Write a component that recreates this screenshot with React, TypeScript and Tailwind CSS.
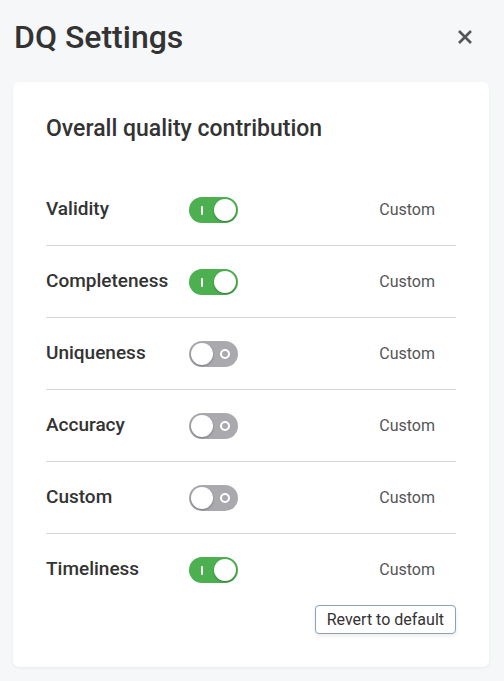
import React from "react";

const rows: { label: string; on: boolean }[] = [
  { label: "Validity", on: true },
  { label: "Completeness", on: true },
  { label: "Uniqueness", on: false },
  { label: "Accuracy", on: false },
  { label: "Custom", on: false },
  { label: "Timeliness", on: true },
];

function Toggle({ on }: { on: boolean }) {
  return (
    <div
      className={
        "relative w-[49px] h-[26px] rounded-full " +
        (on ? "bg-[#4caf50]" : "bg-[#a9a9ae]")
      }
    >
      {on ? (
        <>
          <div className="absolute left-[12px] top-[9px] w-[2px] h-[9px] bg-white rounded-sm" />
          <div className="absolute right-[2px] top-[2px] w-[22px] h-[22px] rounded-full bg-white shadow-[0_1px_2px_rgba(0,0,0,0.3)]" />
        </>
      ) : (
        <>
          <div className="absolute right-[8px] top-[8px] w-[10px] h-[10px] rounded-full border-2 border-white" />
          <div className="absolute left-[2px] top-[2px] w-[22px] h-[22px] rounded-full bg-white shadow-[0_1px_2px_rgba(0,0,0,0.3)]" />
        </>
      )}
    </div>
  );
}

export default function App() {
  return (
    <div
      className="w-[504px] h-[681px] bg-[#f6f7f9] overflow-hidden"
      style={{ fontFamily: "Roboto, 'Noto Sans', sans-serif" }}
    >
      <div className="flex items-center justify-between pl-[14px] pr-[31px] pt-[17px] h-[56px]">
        <h1 className="text-[32px] leading-[38px] font-medium text-[#333]">DQ Settings</h1>
        <svg width="16" height="16" viewBox="0 0 16 16" className="mt-[1px]">
          <path d="M2 2 L14 14 M14 2 L2 14" stroke="#555" strokeWidth="2.6" strokeLinecap="butt" />
        </svg>
      </div>
      <div className="mx-[13px] mt-[26px] w-[476px] bg-white rounded-[6px] shadow-[0_1px_3px_rgba(0,0,0,0.06)] px-[33px] pt-[32px] pb-[33px]">
        <h2 className="text-[23px] leading-[30px] font-medium text-[#333]">Overall quality contribution</h2>
        <div className="mt-[30px]">
          {rows.map((r, i) => (
            <div
              key={r.label}
              className={
                "flex items-center " +
                (i < rows.length - 1 ? "h-[72px] border-b border-[#d3d7dc]" : "h-[71px]")
              }
            >
              <div className="w-[143px] text-[19px] font-medium text-[#333]">{r.label}</div>
              <Toggle on={r.on} />
              <div className="flex-1" />
              <div className="text-[16px] text-[#555] mr-[21px]">Custom</div>
            </div>
          ))}
        </div>
        <div className="flex justify-end">
          <button className="h-[29px] px-[11px] border border-[#8da2b5] rounded-[4px] text-[16px] text-[#333] bg-white shadow-[0_2px_4px_rgba(0,0,0,0.08)]">
            Revert to default
          </button>
        </div>
      </div>
    </div>
  );
}
